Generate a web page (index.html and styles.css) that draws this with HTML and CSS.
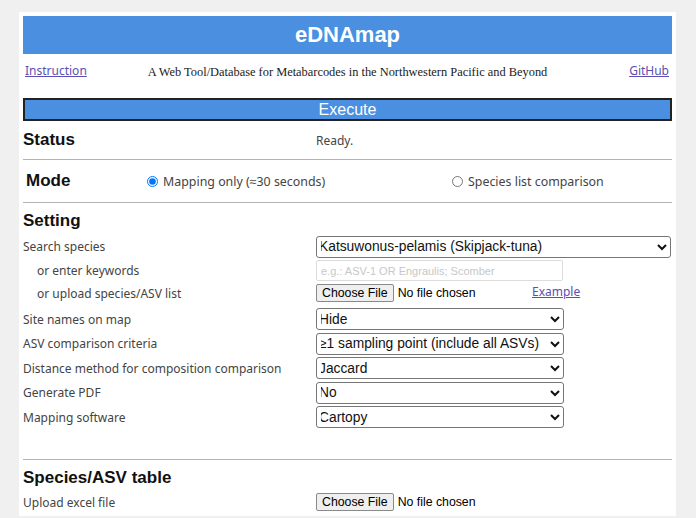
FILE: index.html
```html
<!DOCTYPE html>
<html>
<head>
<meta charset="utf-8">
<link rel="stylesheet" href="styles.css">
</head>
<body>
<div class="page">
  <div class="banner">eDNAmap</div>
  <div class="sub">
    <a href="#" class="link">Instruction</a>
    <div class="tagline">A Web Tool/Database for Metabarcodes in the Northwestern Pacific and Beyond</div>
    <a href="#" class="link right">GitHub</a>
  </div>
  <div class="execute">Execute</div>

  <div class="status">
    <h2 class="heading">Status</h2>
    <span class="label">Ready.</span>
  </div>
  <div class="rule"></div>
  <div class="mode">
    <h2 class="heading">Mode</h2>
    <label class="opt"><input type="radio" name="mode" checked> Mapping only (≈30 seconds)</label>
    <label class="opt"><input type="radio" name="mode"> Species list comparison</label>
  </div>
  <div class="rule"></div>

  <h2 class="heading section">Setting</h2>
  <div class="row">
    <span class="label">Search species</span>
    <select class="sel wide"><option>Katsuwonus-pelamis (Skipjack-tuna)</option></select>
  </div>
  <div class="row">
    <span class="label indent">or enter keywords</span>
    <input class="kw" type="text" placeholder="e.g.: ASV-1 OR Engraulis; Scomber">
  </div>
  <div class="row upload">
    <span class="label indent">or upload species/ASV list</span>
    <div class="filewrap">
      <input type="file" class="file">
      <a href="#" class="link example">Example</a>
    </div>
  </div>
  <div class="row tall">
    <span class="label">Site names on map</span>
    <select class="sel"><option>Hide</option></select>
  </div>
  <div class="row mid">
    <span class="label">ASV comparison criteria</span>
    <select class="sel"><option>≥1 sampling point (include all ASVs)</option></select>
  </div>
  <div class="row mid">
    <span class="label">Distance method for composition comparison</span>
    <select class="sel"><option>Jaccard</option></select>
  </div>
  <div class="row mid">
    <span class="label">Generate PDF</span>
    <select class="sel"><option>No</option></select>
  </div>
  <div class="row mid">
    <span class="label">Mapping software</span>
    <select class="sel"><option>Cartopy</option></select>
  </div>

  <div class="rule gap"></div>
  <h2 class="heading section2">Species/ASV table</h2>
  <div class="row">
    <span class="label">Upload excel file</span>
    <div class="filewrap"><input type="file" class="file"></div>
  </div>
</div>
</body>
</html>
```
FILE: styles.css
```css
html, body {
  margin: 0;
  background: #f0f0f0;
  font-family: "Noto Sans", sans-serif;
}
.page {
  width: 649px;
  margin: 12px 0 0 19px;
  padding: 4px 4px 2px;
  background: #fff;
}
.banner {
  height: 38px;
  background: #4a8fe0;
  color: #fff;
  font: bold 22px "Liberation Sans", Arial, sans-serif;
  display: flex;
  align-items: center;
  justify-content: center;
}
.sub {
  height: 44px;
  display: grid;
  grid-template-columns: 1fr auto 1fr;
  align-items: start;
}
.link {
  font-size: 12px;
  color: #5a4fb3;
  text-decoration: underline;
}
.sub .link {
  margin-top: 8px;
  margin-left: 2px;
  justify-self: start;
}
.sub .link.right {
  justify-self: end;
  margin-right: 3px;
}
.tagline {
  font-family: "Liberation Serif", serif;
  font-size: 12.4px;
  color: #1a1a1a;
  margin-top: 11px;
}
.execute {
  height: 19px;
  border: 2px solid #222;
  background: #4a8fe0;
  color: #fff;
  font: 16px/19px "Liberation Sans", Arial, sans-serif;
  text-align: center;
}
.heading {
  margin: 0;
  font: bold 17px/20px "Liberation Sans", Arial, sans-serif;
  color: #111;
}
.label {
  font-size: 12px;
  color: #444;
}
.status {
  height: 38px;
  display: grid;
  grid-template-columns: 293px 1fr;
  align-items: center;
}
.rule {
  border-top: 1px solid #b4b4b4;
}
.mode {
  height: 42px;
  display: grid;
  grid-template-columns: 124px 305px 1fr;
  align-items: center;
}
.mode .heading {
  padding-left: 3px;
}
.opt {
  font-size: 12.4px;
  color: #444;
  display: flex;
  align-items: center;
  gap: 5px;
}
.opt input {
  width: 11px;
  height: 11px;
  margin: 0;
}
.section {
  padding: 8px 0 3.5px;
}
.row {
  height: 24px;
  display: grid;
  grid-template-columns: 293px 1fr;
  align-items: center;
}
.row.tall { height: 25px; }
.row.mid { height: 24.5px; }
.row.upload { align-items: start; }
.row.upload .label { margin-top: 2px; }
.row.upload .filewrap { margin-top: 1px; }
.indent { padding-left: 14px; }
.sel {
  height: 22px;
  width: 248px;
  font: 13.8px "Liberation Sans", Arial, sans-serif;
  color: #111;
  border: 1px solid #767676;
  border-radius: 3px;
  background: #fff;
  padding: 0;
  text-indent: -2px;
  margin: 0;
}
.sel.wide { width: 355px; }
.kw {
  width: 247px;
  height: 21px;
  box-sizing: border-box;
  border: 1px solid #dcdcdc;
  border-radius: 2px;
  font: 11px "Liberation Sans", Arial, sans-serif;
  padding: 0 4px;
  margin: 0;
}
.kw::placeholder { color: #c8c8c8; }
.filewrap {
  display: flex;
  align-items: center;
}
.file {
  font: 12.3px "Liberation Sans", Arial, sans-serif;
  color: #000;
  width: 216px;
  margin: 0;
}
.file::file-selector-button {
  font: 12.3px "Liberation Sans", Arial, sans-serif;
  height: 18.5px;
  padding: 0 5px;
  border: 1px solid #8a8a8a;
  border-radius: 2px;
  background: #efefef;
  margin-right: 4px;
}
.example {
  margin-top: -2px;
}
.gap {
  margin-top: 29.5px;
}
.section2 {
  padding: 8px 0 2px;
}
```
